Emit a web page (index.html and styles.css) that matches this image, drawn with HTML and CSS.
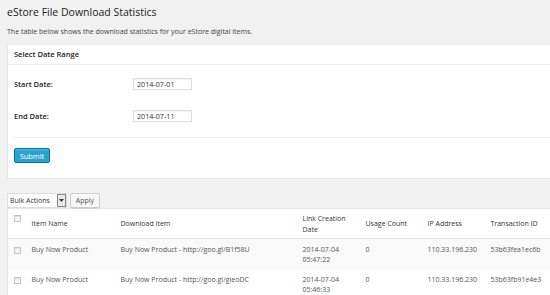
FILE: index.html
```html
<!DOCTYPE html>
<html>
<head>
<meta charset="utf-8">
<link rel="stylesheet" href="styles.css">
</head>
<body>
<div class="wrap">
  <h2 class="title">eStore File Download Statistics</h2>
  <p class="desc">The table below shows the download statistics for your eStore digital items.</p>

  <div class="panel">
    <div class="panel-head">Select Date Range</div>
    <div class="panel-body">
      <div class="form-row">
        <label class="form-label">Start Date:</label>
        <input class="date-input" type="text" value="2014-07-01">
      </div>
      <div class="form-row">
        <label class="form-label">End Date:</label>
        <input class="date-input" type="text" value="2014-07-11">
      </div>
      <div class="sep"></div>
      <button class="btn-primary">Submit</button>
    </div>
  </div>

  <div class="tablenav">
    <div class="select">
      <span class="select-text">Bulk Actions</span>
      <span class="select-arrow"><svg width="5" height="3" viewBox="0 0 5 3"><path d="M0 0H5L2.5 3Z" fill="#333"/></svg></span>
    </div>
    <button class="btn">Apply</button>
  </div>

  <table class="list">
    <colgroup>
      <col class="c-cb"><col class="c-name"><col class="c-item"><col class="c-date"><col class="c-count"><col class="c-ip"><col class="c-tx">
    </colgroup>
    <thead>
      <tr>
        <th class="cb"><span class="check"></span></th>
        <th>Item Name</th>
        <th>Download Item</th>
        <th>Link Creation Date</th>
        <th>Usage Count</th>
        <th>IP Address</th>
        <th>Transaction ID</th>
      </tr>
    </thead>
    <tbody>
      <tr class="alt">
        <td class="cb"><span class="check"></span></td>
        <td>Buy Now Product</td>
        <td>Buy Now Product - http://goo.gl/B1f58U</td>
        <td>2014-07-04<br>05:47:22</td>
        <td>0</td>
        <td>110.33.196.230</td>
        <td>53b63fea1ec6b</td>
      </tr>
      <tr>
        <td class="cb"><span class="check"></span></td>
        <td>Buy Now Product</td>
        <td>Buy Now Product - http://goo.gl/gieoDC</td>
        <td>2014-07-04<br>05:46:33</td>
        <td>0</td>
        <td>110.33.196.230</td>
        <td>53b63fb91e4e3</td>
      </tr>
    </tbody>
  </table>
</div>
</body>
</html>
```
FILE: styles.css
```css
html, body {
  margin: 0;
  padding: 0;
  background: #f1f1f1;
  overflow: hidden;
}
body {
  font-family: "Open Sans", "Liberation Sans", sans-serif;
  font-size: 7px;
  color: #444;
  width: 550px;
  height: 295px;
}
.wrap {
  padding-left: 7px;
  width: 580px;
}
.title {
  margin: 3px 0 0;
  font-size: 10.5px;
  font-weight: 400;
  line-height: 18px;
  color: #222;
}
.desc {
  margin: 5px 0 0;
  line-height: 12px;
  color: #444;
}
.panel {
  margin-top: 6px;
  background: #fff;
  border: 1px solid #e5e5e5;
  border-right: none;
}
.panel-head {
  height: 19px;
  line-height: 19px;
  padding-left: 6px;
  font-size: 7.5px;
  font-weight: 600;
  color: #222;
  border-bottom: 1px solid #eee;
}
.panel-body {
  padding: 3px 6px 15px;
}
.form-row {
  display: flex;
  align-items: center;
  height: 32px;
}
.form-label {
  width: 119px;
  font-size: 7.5px;
  font-weight: 600;
  color: #222;
}
.date-input {
  box-sizing: border-box;
  width: 59px;
  height: 12px;
  margin: 0;
  padding: 0 3px;
  border: 1px solid #ddd;
  font-family: inherit;
  font-size: 7.2px;
  color: #333;
  box-shadow: inset 0 1px 1px rgba(0,0,0,0.05);
  outline: none;
}
.sep {
  margin-top: 5px;
  height: 1px;
  background: #eee;
}
.btn-primary {
  display: block;
  margin-top: 10px;
  width: 36px;
  height: 15px;
  padding: 0;
  border: 1px solid #0074a2;
  border-radius: 2px;
  background: #2ea2cc;
  color: #fff;
  font-family: inherit;
  font-size: 7.4px;
  box-shadow: inset 0 1px 0 rgba(120,200,230,0.5);
}
.tablenav {
  display: flex;
  align-items: center;
  gap: 3px;
  margin-top: 13px;
  height: 16px;
}
.select {
  display: flex;
  align-items: center;
  box-sizing: border-box;
  height: 15px;
  width: 60px;
  border: 1px solid #ddd;
  background: #fff;
}
.select-text {
  flex: 1;
  padding-left: 2px;
  color: #333;
  white-space: nowrap;
}
.select-arrow {
  display: flex;
  align-items: center;
  justify-content: center;
  box-sizing: border-box;
  width: 9px;
  height: 13px;
  border: 1px solid #888;
  background: #e8e8e8;
}
.btn {
  box-sizing: border-box;
  height: 15px;
  width: 30px;
  padding: 0;
  border: 1px solid #ccc;
  border-radius: 2px;
  background: #f7f7f7;
  color: #555;
  font-family: inherit;
  font-size: 7px;
  box-shadow: inset 0 1px 0 #fff, 0 1px 0 rgba(0,0,0,0.08);
}
.list {
  margin-top: 0;
  border-collapse: collapse;
  table-layout: fixed;
  width: 580px;
  background: #fff;
  border: 1px solid #e5e5e5;
}
.c-cb { width: 18px; }
.c-name { width: 89px; }
.c-item { width: 182px; }
.c-date { width: 63px; }
.c-count { width: 62px; }
.c-ip { width: 63px; }
.c-tx { width: 103px; }
.list th {
  box-sizing: border-box;
  height: 30px;
  padding: 0 6px;
  text-align: left;
  font-weight: 400;
  color: #333;
  line-height: 11px;
  vertical-align: middle;
  border-bottom: 1px solid #e1e1e1;
}
.list th.cb {
  vertical-align: top;
  padding-top: 6px;
}
.list td {
  height: 30px;
  box-sizing: border-box;
  padding: 6px 6px 4px;
  vertical-align: top;
  line-height: 10px;
  color: #555;
}
.list tr.alt td {
  background: #f9f9f9;
}
.list td.cb, .list th.cb {
  padding-left: 6px;
  padding-right: 0;
}
.list td.cb {
  padding-top: 8px;
}
.check {
  display: block;
  box-sizing: border-box;
  width: 7px;
  height: 7px;
  border: 1px solid #c4c4c4;
  background: #f4f4f4;
  box-shadow: inset 0 1px 1px rgba(0,0,0,0.08);
}
```
